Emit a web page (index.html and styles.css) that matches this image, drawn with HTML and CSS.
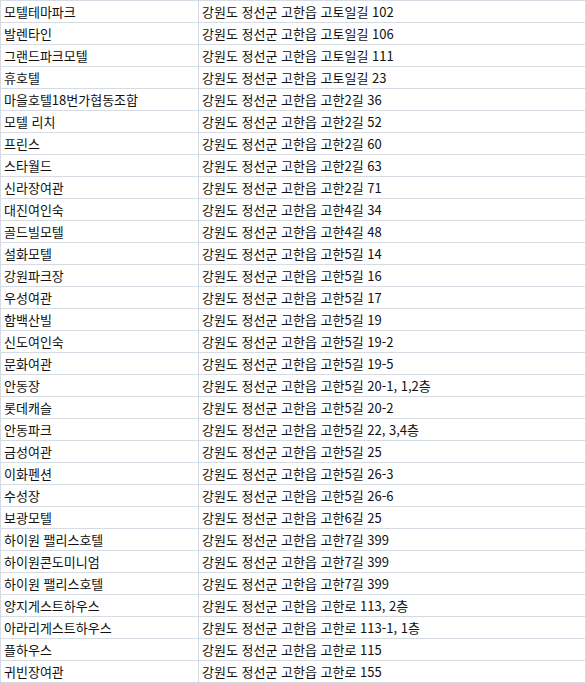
FILE: index.html
```html
<!DOCTYPE html>
<html lang="ko">
<head>
<meta charset="utf-8">
<link rel="stylesheet" href="styles.css">
</head>
<body>
<div class="sheet">
<div class="c">모텔테마파크</div><div class="c">강원도 정선군 고한읍 고토일길 102</div>
<div class="c">발렌타인</div><div class="c">강원도 정선군 고한읍 고토일길 106</div>
<div class="c">그랜드파크모텔</div><div class="c">강원도 정선군 고한읍 고토일길 111</div>
<div class="c">휴호텔</div><div class="c">강원도 정선군 고한읍 고토일길 23</div>
<div class="c">마을호텔18번가협동조합</div><div class="c">강원도 정선군 고한읍 고한2길 36</div>
<div class="c">모텔 리치</div><div class="c">강원도 정선군 고한읍 고한2길 52</div>
<div class="c">프린스</div><div class="c">강원도 정선군 고한읍 고한2길 60</div>
<div class="c">스타월드</div><div class="c">강원도 정선군 고한읍 고한2길 63</div>
<div class="c">신라장여관</div><div class="c">강원도 정선군 고한읍 고한2길 71</div>
<div class="c">대진여인숙</div><div class="c">강원도 정선군 고한읍 고한4길 34</div>
<div class="c">골드빌모텔</div><div class="c">강원도 정선군 고한읍 고한4길 48</div>
<div class="c">설화모텔</div><div class="c">강원도 정선군 고한읍 고한5길 14</div>
<div class="c">강원파크장</div><div class="c">강원도 정선군 고한읍 고한5길 16</div>
<div class="c">우성여관</div><div class="c">강원도 정선군 고한읍 고한5길 17</div>
<div class="c">함백산빌</div><div class="c">강원도 정선군 고한읍 고한5길 19</div>
<div class="c">신도여인숙</div><div class="c">강원도 정선군 고한읍 고한5길 19-2</div>
<div class="c">문화여관</div><div class="c">강원도 정선군 고한읍 고한5길 19-5</div>
<div class="c">안동장</div><div class="c">강원도 정선군 고한읍 고한5길 20-1, 1,2층</div>
<div class="c">롯데캐슬</div><div class="c">강원도 정선군 고한읍 고한5길 20-2</div>
<div class="c">안동파크</div><div class="c">강원도 정선군 고한읍 고한5길 22, 3,4층</div>
<div class="c">금성여관</div><div class="c">강원도 정선군 고한읍 고한5길 25</div>
<div class="c">이화펜션</div><div class="c">강원도 정선군 고한읍 고한5길 26-3</div>
<div class="c">수성장</div><div class="c">강원도 정선군 고한읍 고한5길 26-6</div>
<div class="c">보광모텔</div><div class="c">강원도 정선군 고한읍 고한6길 25</div>
<div class="c">하이원 팰리스호텔</div><div class="c">강원도 정선군 고한읍 고한7길 399</div>
<div class="c">하이원콘도미니엄</div><div class="c">강원도 정선군 고한읍 고한7길 399</div>
<div class="c">하이원 팰리스호텔</div><div class="c">강원도 정선군 고한읍 고한7길 399</div>
<div class="c">양지게스트하우스</div><div class="c">강원도 정선군 고한읍 고한로 113, 2층</div>
<div class="c">아라리게스트하우스</div><div class="c">강원도 정선군 고한읍 고한로 113-1, 1층</div>
<div class="c">플하우스</div><div class="c">강원도 정선군 고한읍 고한로 115</div>
<div class="c">귀빈장여관</div><div class="c">강원도 정선군 고한읍 고한로 155</div>
</div>
</body>
</html>
```
FILE: styles.css
```css
html, body {
  margin: 0;
  padding: 0;
  background: #ffffff;
}
.sheet {
  display: grid;
  grid-template-columns: 197px 386px;
  grid-auto-rows: 21px;
  gap: 1px;
  padding: 1px;
  width: 586px;
  box-sizing: border-box;
  background: #d5dae3;
  font-family: "Noto Sans CJK KR", "Noto Sans", sans-serif;
  font-size: 13px;
  color: #111111;
}
.c {
  background: #ffffff;
  padding-left: 3px;
  line-height: 21px;
  white-space: nowrap;
  overflow: hidden;
}
```
